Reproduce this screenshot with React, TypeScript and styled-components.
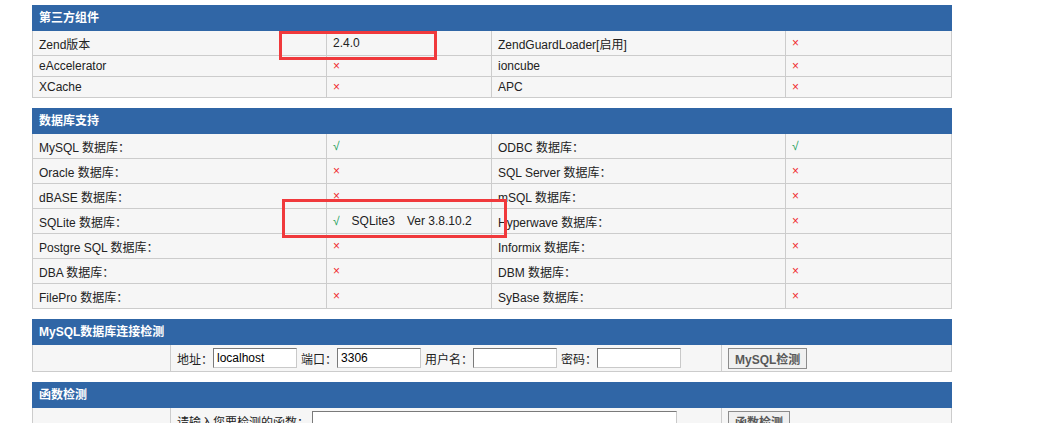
import React from "react";
import styled, { createGlobalStyle } from "styled-components";

const GlobalStyle = createGlobalStyle`
  html, body {
    margin: 0;
    padding: 0;
    background: #ffffff;
  }
  body {
    font-family: "Liberation Sans", Arial, "Noto Sans CJK SC", sans-serif;
    font-size: 12px;
    color: #222;
  }
`;

const Page = styled.div`
  position: relative;
  padding: 5px 0 0 32px;
`;

const Panel = styled.section`
  width: 920px;
  margin-bottom: 10px;
`;

const PanelTitle = styled.div`
  height: 26px;
  line-height: 26px;
  padding: 0 7px;
  background: #3066a6;
  color: #ffffff;
  font-weight: bold;
  font-size: 12px;
`;

const Grid = styled.div<{ $cols: string; $rows: string }>`
  display: grid;
  grid-template-columns: ${(p) => p.$cols};
  grid-template-rows: ${(p) => p.$rows};
  gap: 1px;
  background: #cccccc;
  border: 1px solid #cccccc;
  border-top: none;
`;

const Cell = styled.div`
  background: #f6f6f6;
  padding: 0 6px;
  display: flex;
  align-items: center;
  white-space: nowrap;
  overflow: hidden;
`;

const Mark = styled.span<{ $ok?: boolean }>`
  color: ${(p) => (p.$ok ? "#17a05a" : "#f0282d")};
  font-size: 12px;
`;

const Extra = styled.span`
  margin-left: 12px;
`;

const Label = styled.span`
  color: #222;
`;

const TextInput = styled.input<{ $w: number; $lead?: number }>`
  box-sizing: border-box;
  width: ${(p) => p.$w}px;
  height: 20px;
  margin: 0 4px 0 ${(p) => p.$lead ?? 0}px;
  padding: 0 3px;
  border: 1px solid;
  border-color: #7a7a7a #c9c9c9 #c9c9c9 #7a7a7a;
  background: #ffffff;
  font-family: "Liberation Sans", Arial, sans-serif;
  font-size: 12px;
  color: #000;
  outline: none;
`;

const Button = styled.button`
  box-sizing: border-box;
  height: 21px;
  padding: 0 6px;
  border: 1px solid #8c8c8c;
  background: #f0f0f0;
  color: #585858;
  font-family: "Liberation Sans", Arial, "Noto Sans CJK SC", sans-serif;
  font-size: 12px;
  font-weight: bold;
  cursor: pointer;
`;

const Highlight = styled.div<{ $x: number; $y: number; $w: number; $h: number }>`
  position: absolute;
  left: ${(p) => p.$x}px;
  top: ${(p) => p.$y}px;
  width: ${(p) => p.$w}px;
  height: ${(p) => p.$h}px;
  box-sizing: border-box;
  border: 3px solid #f0393c;
  pointer-events: none;
`;

const FOUR_COLS = "293px 164px 293px 165px";
const THREE_COLS = "137px 550px 229px";

type Val = { ok: boolean; extra?: string[] } | string;

const renderVal = (v: Val) => {
  if (typeof v === "string") return v;
  return (
    <>
      <Mark $ok={v.ok}>{v.ok ? "√" : "×"}</Mark>
      {v.extra?.map((e) => (
        <Extra key={e}>{e}</Extra>
      ))}
    </>
  );
};

const thirdParty: [string, Val, string, Val][] = [
  ["Zend版本", "2.4.0", "ZendGuardLoader[启用]", { ok: false }],
  ["eAccelerator", { ok: false }, "ioncube", { ok: false }],
  ["XCache", { ok: false }, "APC", { ok: false }],
];

const databases: [string, Val, string, Val][] = [
  ["MySQL 数据库：", { ok: true }, "ODBC 数据库：", { ok: true }],
  ["Oracle 数据库：", { ok: false }, "SQL Server 数据库：", { ok: false }],
  ["dBASE 数据库：", { ok: false }, "mSQL 数据库：", { ok: false }],
  [
    "SQLite 数据库：",
    { ok: true, extra: ["SQLite3", "Ver 3.8.10.2"] },
    "Hyperwave 数据库：",
    { ok: false },
  ],
  ["Postgre SQL 数据库：", { ok: false }, "Informix 数据库：", { ok: false }],
  ["DBA 数据库：", { ok: false }, "DBM 数据库：", { ok: false }],
  ["FilePro 数据库：", { ok: false }, "SyBase 数据库：", { ok: false }],
];

const FourColTable = ({ rows, heights }: { rows: [string, Val, string, Val][]; heights: string }) => (
  <Grid $cols={FOUR_COLS} $rows={heights}>
    {rows.map((r, i) => (
      <React.Fragment key={i}>
        <Cell>{r[0]}</Cell>
        <Cell>{renderVal(r[1])}</Cell>
        <Cell>{r[2]}</Cell>
        <Cell>{renderVal(r[3])}</Cell>
      </React.Fragment>
    ))}
  </Grid>
);

export default function App() {
  return (
    <>
      <GlobalStyle />
      <Page>
        <Panel>
          <PanelTitle>第三方组件</PanelTitle>
          <FourColTable rows={thirdParty} heights="24px 20px 20px" />
        </Panel>

        <Panel>
          <PanelTitle>数据库支持</PanelTitle>
          <FourColTable rows={databases} heights="repeat(7, 24px)" />
        </Panel>

        <Panel>
          <PanelTitle>MySQL数据库连接检测</PanelTitle>
          <Grid $cols={THREE_COLS} $rows="26px">
            <Cell />
            <Cell>
              <Label>地址：</Label>
              <TextInput $w={84} defaultValue="localhost" />
              <Label>端口：</Label>
              <TextInput $w={84} defaultValue="3306" />
              <Label>用户名：</Label>
              <TextInput $w={84} defaultValue="" />
              <Label>密码：</Label>
              <TextInput $w={84} type="password" defaultValue="" />
            </Cell>
            <Cell>
              <Button>MySQL检测</Button>
            </Cell>
          </Grid>
        </Panel>

        <Panel>
          <PanelTitle>函数检测</PanelTitle>
          <Grid $cols={THREE_COLS} $rows="26px">
            <Cell />
            <Cell>
              <Label>请输入您要检测的函数：</Label>
              <TextInput $w={365} $lead={3} defaultValue="" />
            </Cell>
            <Cell>
              <Button>函数检测</Button>
            </Cell>
          </Grid>
        </Panel>

        <Highlight $x={279} $y={31} $w={158} $h={29} />
        <Highlight $x={282} $y={199} $w={225} $h={39} />
      </Page>
    </>
  );
}
